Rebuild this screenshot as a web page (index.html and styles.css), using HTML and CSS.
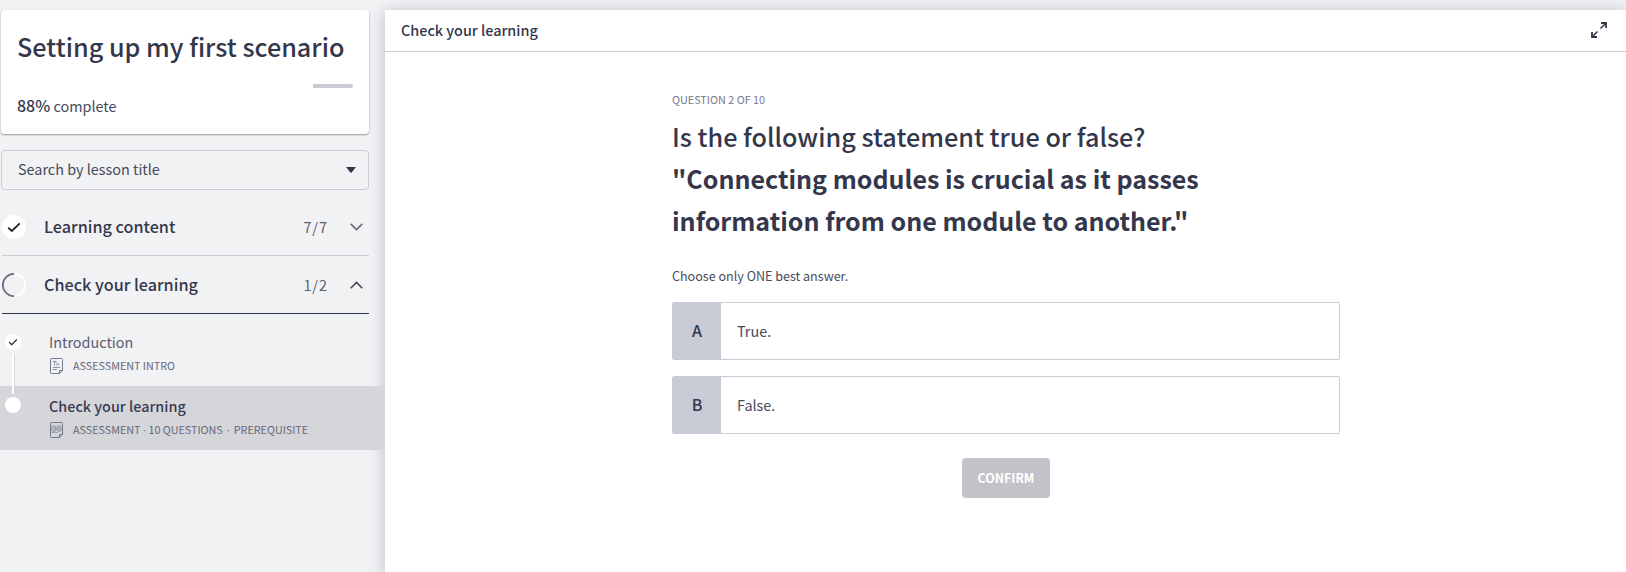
FILE: index.html
```html
<!DOCTYPE html>
<html lang="en">
<head>
<meta charset="utf-8">
<title>Setting up my first scenario</title>
<link rel="stylesheet" href="styles.css">
</head>
<body>
<div class="app">
  <aside class="sidebar">
    <section class="course-card">
      <h1 class="course-title">Setting up my first scenario</h1>
      <div class="progress"><div class="progress-rest"></div></div>
      <p class="progress-label"><b>88%</b> complete</p>
    </section>
    <div class="search">
      <span>Search by lesson title</span>
      <svg class="caret" width="10" height="6" viewBox="0 0 10 6"><path d="M0 0h10L5.600 5.400q-.6.6-1.200 0z" fill="#34364c"/></svg>
    </div>
    <div class="section-row">
      <svg class="status" width="24" height="24" viewBox="0 0 24 24"><circle cx="12" cy="12" r="12" fill="#fff"/><path d="M6.200 12.600l3.600 3.400 8-7.600" fill="none" stroke="#222" stroke-width="1.800"/></svg>
      <span class="section-name">Learning content</span>
      <span class="count">7/7</span>
      <svg width="13" height="8" viewBox="0 0 13 8"><path d="M.7.8l5.800 5.800 5.800-5.800" fill="none" stroke="#6c6c84" stroke-width="1.700"/></svg>
    </div>
    <div class="section-row open">
      <svg class="status" width="24" height="24" viewBox="0 0 24 24"><path d="M12 .8a11.200 11.200 0 0 1 0 22.400" fill="none" stroke="#fff" stroke-width="1.600"/><path d="M12 .8a11.200 11.200 0 0 0 0 22.400" fill="none" stroke="#6c6c84" stroke-width="1.800"/></svg>
      <span class="section-name">Check your learning</span>
      <span class="count">1/2</span>
      <svg width="13" height="8" viewBox="0 0 13 8"><path d="M.7 7.200l5.800-5.800 5.800 5.800" fill="none" stroke="#40415a" stroke-width="1.500"/></svg>
    </div>
    <ul class="lessons">
      <li class="lesson">
        <svg class="dot" width="16" height="16" viewBox="0 0 16 16"><circle cx="8" cy="8" r="8" fill="#fff"/><path d="M4.200 8.300l2.500 2.400 5.200-5.200" fill="none" stroke="#222" stroke-width="1.200"/></svg>
        <span class="connector"></span>
        <div class="lesson-name">Introduction</div>
        <div class="meta">
          <svg width="13" height="16" viewBox="0 0 13 16" fill="none" stroke="#77788e"><path d="M1.500.5h10a1 1 0 0 1 1 1v11l-3 3h-8a1 1 0 0 1-1-1v-13a1 1 0 0 1 1-1zM9.500 15.500v-3h3"/><path d="M2.500 3.500h4.200M4.600 3.500v4M6.200 4.800l2.800 2.900M9 4.800L6.200 7.700M2.800 9.500h7.400M2.800 11.500h4.200" stroke-width=".8"/></svg>
          <span>ASSESSMENT INTRO</span>
        </div>
      </li>
      <li class="lesson active">
        <svg class="dot" width="16" height="16" viewBox="0 0 16 16"><circle cx="8" cy="8" r="8" fill="#fff"/></svg>
        <div class="lesson-name">Check your learning</div>
        <div class="meta">
          <svg width="13" height="16" viewBox="0 0 13 16" fill="none" stroke="#77788e"><path d="M1.500.5h10a1 1 0 0 1 1 1v11l-3 3h-8a1 1 0 0 1-1-1v-13a1 1 0 0 1 1-1zM9.500 15.500v-3h3"/><path d="M1 3.900h11M1 10.500h7" stroke-width=".5"/><g stroke-width=".8"><circle cx="3.800" cy="7.200" r="2.200"/><circle cx="9.200" cy="7.200" r="2.200"/><path d="M2.800 7.200l.9.8 2.500-2.600M8.500 6.500l1.400 1.400M9.900 6.500L8.500 7.900"/></g></svg>
          <span>ASSESSMENT<i class="sep">·</i>10 QUESTIONS<i class="sep wide">·</i>PREREQUISITE</span>
        </div>
      </li>
    </ul>
  </aside>
  <main class="panel">
    <header class="panel-head">
      <span>Check your learning</span>
      <svg width="16" height="16" viewBox="0 0 16 16" fill="none" stroke="#34364c" stroke-width="1.500"><path d="M9.500 6.500L15 1M6.500 9.500L1 15"/><path d="M10 1h5v5M1 10v5h5" stroke-width="1.800"/></svg>
    </header>
    <section class="quiz">
      <p class="step">QUESTION 2 OF 10</p>
      <h2 class="question">Is the following statement true or false?<br><b>"Connecting modules is crucial as it passes<br>information from one module to another."</b></h2>
      <p class="hint">Choose only ONE best answer.</p>
      <div class="option"><div class="letter">A</div><div class="answer">True.</div></div>
      <div class="option"><div class="letter">B</div><div class="answer">False.</div></div>
      <button class="confirm">CONFIRM</button>
    </section>
  </main>
</div>
</body>
</html>
```
FILE: styles.css
```css
* { box-sizing: border-box; }
body {
  margin: 0;
  background: #f1f2f4;
  color: #34374c;
  font-family: "Noto Sans CJK SC", "Noto Sans", sans-serif;
  font-size: 14.4px;
}
h1, h2, p, ul { margin: 0; padding: 0; font-weight: 400; }
ul { list-style: none; }
svg { display: block; flex: none; }
.app { display: flex; height: 572px; padding-top: 10px; overflow: hidden; }

.sidebar { width: 385px; flex: none; }
.course-card {
  width: 368px;
  height: 124px;
  margin-left: 1px;
  padding: 15px 16px 0;
  background: #fff;
  border-radius: 4px;
  box-shadow: 0 1px 2px rgba(40, 42, 60, .45);
}
.course-title { font-size: 25.2px; line-height: 42px; font-weight: 500; white-space: nowrap; }
.progress { display: flex; justify-content: flex-end; height: 4px; margin-top: 17px; }
.progress-rest { width: 40px; height: 4px; background: #c9ccd6; border-radius: 0 2px 2px 0; }
.progress-label { margin-top: 4px; line-height: 26px; color: #484a5c; }
.progress-label b { font-size: 16px; font-weight: 500; color: #34374c; }
.search {
  display: flex;
  align-items: center;
  justify-content: space-between;
  width: 368px;
  height: 40px;
  margin: 16px 0 0 1px;
  padding: 0 12px 0 16px;
  border: 1px solid #c9ccd8;
  border-radius: 4px;
  color: #484a5c;
}
.search span { padding-bottom: 3px; }
.section-row {
  display: flex;
  align-items: center;
  width: 367px;
  height: 58px;
  margin-left: 2px;
  padding-right: 6px;
  border-bottom: 1px solid #cbccd2;
}
.search + .section-row { margin-top: 8px; }
.section-row.open { border-color: #34374c; }
.section-name { flex: 1; margin-left: 18px; padding-bottom: 1px; font-size: 16.2px; font-weight: 500; }
.count { margin-right: 22px; color: #5c5d72; letter-spacing: 1px; }

.lessons { padding-top: 8px; }
.lesson { position: relative; height: 64px; padding: 8px 0 0 49px; color: #5a5b72; }
.lesson.active { background: #d5d6da; }
.lesson.active .lesson-name { font-weight: 500; color: #3a3b52; }
.dot { position: absolute; left: 5px; top: 12px; }
.active .dot { top: 11px; }
.connector {
  position: absolute;
  z-index: 1;
  left: 12px;
  top: 32px;
  width: 3px;
  height: 40px;
  background: #fff;
  border: solid #d5d6da;
  border-width: 0 1px 0 0;
  border-radius: 2px;
}
.lesson-name { line-height: 24px; }
.meta { display: flex; align-items: center; gap: 10px; height: 24px; margin-left: 1px; font-size: 10.75px; color: #66677c; white-space: nowrap; }
.meta span { padding-bottom: 2px; }
.sep { display: inline-block; width: 8px; text-align: center; font: 11px "Liberation Sans", sans-serif; }
.sep.wide { width: 11px; }

.panel {
  flex: 1;
  background: #fff;
  box-shadow: 0 2px 14px rgba(40, 42, 60, .28);
}
.panel-head {
  display: flex;
  align-items: center;
  justify-content: space-between;
  height: 42px;
  padding: 0 19px 0 16px;
  border-bottom: 1px solid #c9cad2;
  font-weight: 500;
}
.panel-head span { padding-bottom: 2px; }
.panel-head svg { margin-bottom: 1px; }
.quiz { width: 668px; margin-left: 287px; padding-top: 37px; }
.step { font-size: 10.8px; line-height: 20px; color: #77788a; }
.question { margin-top: 6px; font-size: 25.2px; font-weight: 500; line-height: 42px; white-space: nowrap; }
.question b { font-size: 25.03px; font-weight: 700; }
.hint { margin-top: 25px; font-size: 12.55px; line-height: 20px; color: #484a5c; }
.option {
  display: flex;
  height: 58px;
  margin-top: 16px;
  border: 1px solid #c9cad6;
  border-radius: 2px;
}
.letter { display: grid; place-items: center; width: 48px; padding-bottom: 2px; background: #c9ccd6; font-size: 16px; font-weight: 500; }
.answer { display: flex; align-items: center; padding: 0 0 2px 16px; color: #484a5c; }
.confirm {
  display: block;
  width: 88px;
  height: 40px;
  margin: 24px auto 0;
  padding: 0 0 1px;
  border: 0;
  border-radius: 4px;
  background: #c2c3c8;
  color: #fff;
  font: 700 12.4px "Noto Sans CJK SC", "Noto Sans", sans-serif;
}
```
